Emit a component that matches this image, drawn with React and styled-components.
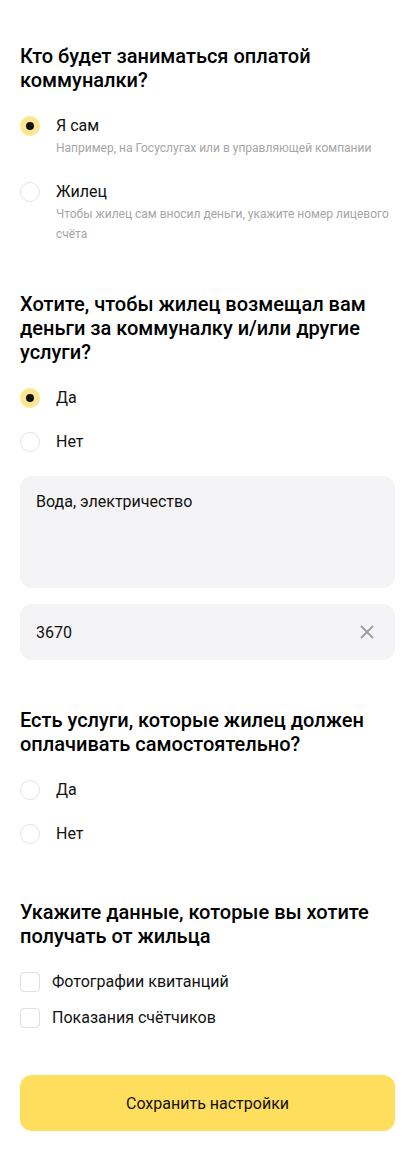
import React, { useState } from "react";
import styled, { createGlobalStyle } from "styled-components";

const GlobalStyle = createGlobalStyle`
    * { box-sizing: border-box; }
    body {
        margin: 0;
        background: #fff;
        font-family: Roboto, "Noto Sans", "Liberation Sans", sans-serif;
        color: #000;
    }
`

const Page = styled.main`
    width: 415px;
    padding: 44px 20px 20px;
`

const Section = styled.section`
    display: flex;
    flex-direction: column;
    margin-bottom: ${p => p.$after || 48}px;
`

const Title = styled.h2`
    margin: 0 0 24px;
    font-size: 20px;
    line-height: 24px;
    font-weight: 500;
`

const Options = styled.div`
    display: flex;
    flex-direction: column;
    gap: ${p => p.$gap || 24}px;
`

const Option = styled.label`
    display: flex;
    align-items: flex-start;
    gap: ${p => p.$gap || 16}px;
    cursor: pointer;
`

const Radio = styled.span`
    flex: none;
    width: 20px;
    height: 20px;
    border-radius: 50%;
    display: flex;
    align-items: center;
    justify-content: center;
    background: ${p => (p.$checked ? "#fce68f" : "#fff")};
    border: ${p => (p.$checked ? "none" : "1px solid #e3e3e3")};

    &::after {
        content: "";
        display: ${p => (p.$checked ? "block" : "none")};
        width: 8px;
        height: 8px;
        border-radius: 50%;
        background: #111;
    }
`

const Checkbox = styled.span`
    flex: none;
    width: 20px;
    height: 20px;
    border-radius: 4px;
    border: 1px solid #e0e0e0;
    background: #fff;
`

const OptionText = styled.div`
    display: flex;
    flex-direction: column;
`

const Label = styled.span`
    font-size: 16px;
    line-height: 20px;
    color: #111;
`

const Hint = styled.span`
    margin-top: 2px;
    font-size: 12px;
    line-height: 20px;
    color: #a6a6a6;
`

const Fields = styled.div`
    display: flex;
    flex-direction: column;
    gap: 16px;
    margin-top: 24px;
`

const TextArea = styled.textarea`
    display: block;
    width: 100%;
    height: 112px;
    resize: none;
    border: none;
    outline: none;
    border-radius: 12px;
    background: #f4f4f6;
    padding: 16px;
    font-family: inherit;
    font-size: 16px;
    line-height: 20px;
    color: #111;
`

const InputBox = styled.div`
    display: flex;
    align-items: center;
    height: 56px;
    border-radius: 12px;
    background: #f4f4f6;
    padding: 0 20px 0 16px;
`

const Input = styled.input`
    flex: 1;
    min-width: 0;
    border: none;
    outline: none;
    background: transparent;
    font-family: inherit;
    font-size: 16px;
    color: #111;
    padding: 0;
`

const ClearButton = styled.button`
    flex: none;
    display: flex;
    align-items: center;
    justify-content: center;
    width: 16px;
    height: 16px;
    padding: 0;
    border: none;
    background: none;
    cursor: pointer;
`

const SaveButton = styled.button`
    display: block;
    width: 100%;
    height: 56px;
    border: none;
    border-radius: 12px;
    background: #ffdd5d;
    font-family: inherit;
    font-size: 16px;
    color: #111;
    cursor: pointer;
`

function RadioGroup({ items, value, onChange }) {
    return (
        <Options>
            {items.map(item => (
                <Option key={item.label} onClick={() => onChange(item.label)}>
                    <Radio $checked={value === item.label} />
                    <OptionText>
                        <Label>{item.label}</Label>
                        {item.hint && <Hint>{item.hint}</Hint>}
                    </OptionText>
                </Option>
            ))}
        </Options>
    )
}

function App() {
    const [payer, setPayer] = useState("Я сам");
    const [refund, setRefund] = useState("Да");
    const [own, setOwn] = useState(null);
    const [sum, setSum] = useState("3670");

    return (
        <>
            <GlobalStyle />
            <Page>
                <Section>
                    <Title>Кто будет заниматься оплатой коммуналки?</Title>
                    <RadioGroup
                        value={payer}
                        onChange={setPayer}
                        items={[
                            { label: "Я сам", hint: "Например, на Госуслугах или в управляющей компании" },
                            { label: "Жилец", hint: "Чтобы жилец сам вносил деньги, укажите номер лицевого счёта" },
                        ]}
                    />
                </Section>

                <Section>
                    <Title>Хотите, чтобы жилец возмещал вам деньги за коммуналку и/или другие услуги?</Title>
                    <RadioGroup
                        value={refund}
                        onChange={setRefund}
                        items={[{ label: "Да" }, { label: "Нет" }]}
                    />
                    <Fields>
                        <TextArea defaultValue="Вода, электричество" />
                        <InputBox>
                            <Input value={sum} onChange={e => setSum(e.target.value)} />
                            <ClearButton onClick={() => setSum("")} aria-label="Очистить">
                                <svg width="14" height="14" viewBox="0 0 14 14">
                                    <path d="M1.5 1.5l11 11M12.5 1.5l-11 11" stroke="#9e9e9e" strokeWidth="1.8" strokeLinecap="round" />
                                </svg>
                            </ClearButton>
                        </InputBox>
                    </Fields>
                </Section>

                <Section $after={56}>
                    <Title>Есть услуги, которые жилец должен оплачивать самостоятельно?</Title>
                    <RadioGroup
                        value={own}
                        onChange={setOwn}
                        items={[{ label: "Да" }, { label: "Нет" }]}
                    />
                </Section>

                <Section $after={47}>
                    <Title>Укажите данные, которые вы хотите получать от жильца</Title>
                    <Options $gap={16}>
                        <Option $gap={12}>
                            <Checkbox />
                            <Label>Фотографии квитанций</Label>
                        </Option>
                        <Option $gap={12}>
                            <Checkbox />
                            <Label>Показания счётчиков</Label>
                        </Option>
                    </Options>
                </Section>

                <SaveButton>Сохранить настройки</SaveButton>
            </Page>
        </>
    )
}

export default App;
